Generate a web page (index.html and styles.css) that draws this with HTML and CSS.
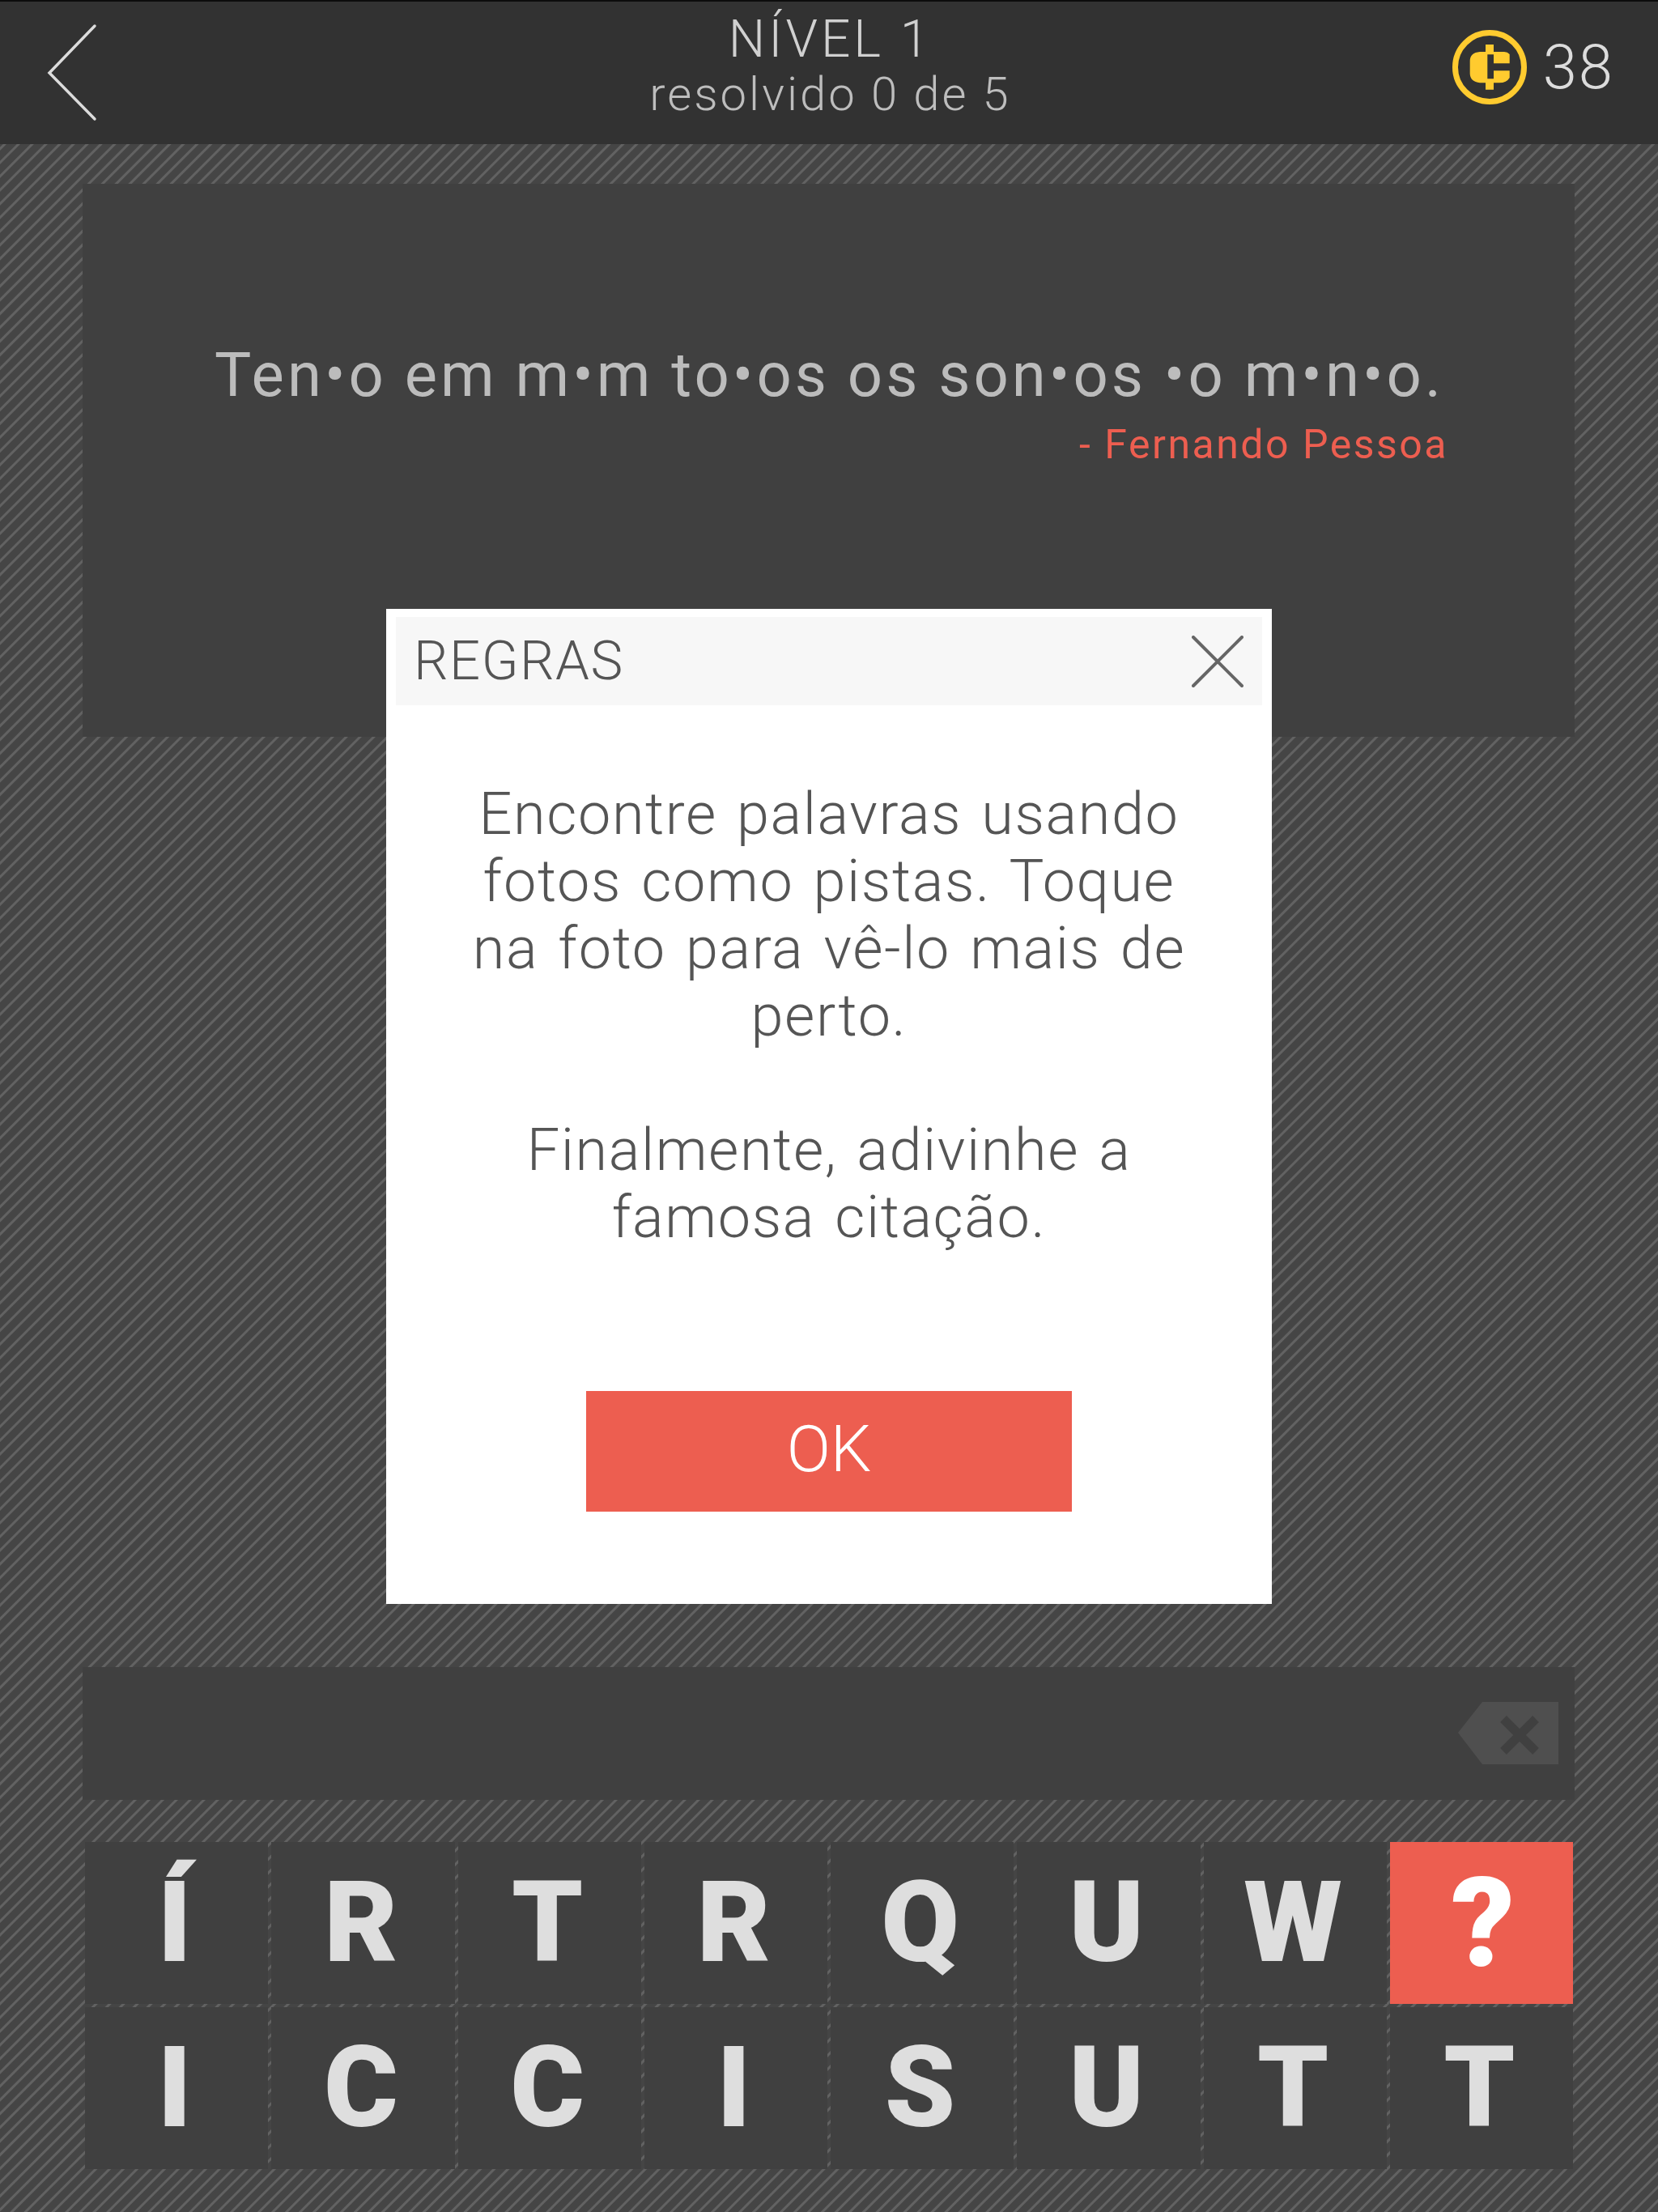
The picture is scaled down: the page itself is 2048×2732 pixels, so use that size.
FILE: index.html
```html
<!DOCTYPE html>
<html lang="pt">
<head>
<meta charset="utf-8">
<title>Nível 1</title>
<link rel="stylesheet" href="styles.css">
</head>
<body>
<div class="screen">
  <header class="topbar">
    <svg class="back" viewBox="0 0 64 124" aria-hidden="true"><path d="M60 3 L4 61 L60 118"/></svg>
    <div class="title">
      <div class="title-main">NÍVEL 1</div>
      <div class="title-sub">resolvido 0 de 5</div>
    </div>
    <div class="coins">
      <svg class="coin" viewBox="0 0 100 100" aria-hidden="true">
        <circle class="coin-ring" cx="50" cy="50" r="42.5"/>
        <path class="coin-c" d="M45 22H55V31H68Q72 31 74.7 34V45.3H55V54.3H74.7V63Q71 69.3 62 69.3H55V77.7H45V69.3H38Q26 68 25.7 58V42Q26 32 38 31H45ZM47.3 34.3V64.3H55V34.3Z" fill-rule="evenodd"/>
      </svg>
      <span class="coin-count">38</span>
    </div>
  </header>

  <section class="quote-panel">
    <p class="quote">Ten•o em m•m to•os os son•os •o m•n•o.</p>
    <p class="author">- Fernando Pessoa</p>
  </section>

  <section class="answer-bar">
    <svg class="backspace" viewBox="0 0 124 78" aria-hidden="true">
      <path class="bs-body" d="M30 0H124V77H30L0 38Z"/>
      <path class="bs-x" d="M56 21L96 61M96 21L56 61"/>
    </svg>
  </section>

  <section class="keys">
    <div class="key">Í</div><div class="key">R</div><div class="key">T</div><div class="key">R</div><div class="key">Q</div><div class="key">U</div><div class="key">W</div><div class="key key-hint">?</div>
    <div class="key">I</div><div class="key">C</div><div class="key">C</div><div class="key">I</div><div class="key">S</div><div class="key">U</div><div class="key">T</div><div class="key">T</div>
  </section>

  <div class="modal">
    <div class="modal-head">
      <span class="modal-title">REGRAS</span>
      <svg class="close" viewBox="0 0 64 64" aria-hidden="true"><path d="M2 2L62 62M62 2L2 62"/></svg>
    </div>
    <div class="modal-body">
      <p class="rule">Encontre palavras usando fotos como pistas. Toque na foto para vê-lo mais de perto.</p>
      <p class="rule">Finalmente, adivinhe a famosa citação.</p>
    </div>
    <div class="ok">OK</div>
  </div>
</div>
</body>
</html>
```
FILE: styles.css
```css
* { box-sizing: border-box; }
html, body { margin: 0; padding: 0; }
body { font-family: Roboto, "Liberation Sans", sans-serif; background: #424242; }
p { margin: 0; }

.screen {
  position: relative;
  width: 2048px;
  height: 2732px;
  overflow: hidden;
  display: flex;
  flex-direction: column;
  background-color: #454545;
  background-image: repeating-linear-gradient(135deg, #454545 0, #454545 8px, #626262 9px, #626262 11px, #454545 12px);
}

.topbar {
  flex: none;
  height: 178px;
  border-top: 2px solid #0c0c0c;
  background: #323232;
  display: grid;
  grid-template-columns: 1fr auto 1fr;
  align-items: center;
  padding: 0 54px 0 57px;
}
.back { width: 64px; height: 124px; fill: none; stroke: #dcdcdc; stroke-width: 3.5; stroke-linecap: round; margin-top: 2px; }
.title { text-align: center; font-weight: 300; color: #d0d0d0; margin-bottom: 17px; }
.title-main { font-size: 64px; line-height: 68px; letter-spacing: 4px; }
.title-sub { font-size: 58px; line-height: 66px; letter-spacing: 3px; color: #bdbdbd; }
.coins { justify-self: end; display: flex; align-items: center; gap: 16px; margin-bottom: 14px; }
.coin { width: 100px; height: 100px; }
.coin-ring { fill: none; stroke: #ffcb2f; stroke-width: 7; }
.coin-c { fill: #ffcb2f; }
.coin-count { font-size: 76px; font-weight: 300; color: #dcdcdc; letter-spacing: 2px; }

.quote-panel {
  flex: none;
  height: 683px;
  margin: 49px 103px 0 102px;
  padding: 185px 156px 0 0;
  background: #404040;
  text-align: right;
}
.quote { font-size: 76px; line-height: 102px; letter-spacing: 4px; word-spacing: -1px; color: #bcbcbc; font-weight: 400; white-space: nowrap; margin-right: 5px; }
.author { font-size: 50px; line-height: 70px; letter-spacing: 2.5px; color: #ed5e50; }

.answer-bar {
  flex: none;
  height: 164px;
  margin: 1149px 103px 0 102px;
  background: #404040;
  display: flex;
  align-items: center;
  justify-content: flex-end;
  padding-right: 20px;
}
.backspace { width: 124px; height: 78px; }
.bs-body { fill: #4f4f4f; }
.bs-x { fill: none; stroke: #404040; stroke-width: 11; }

.keys {
  flex: none;
  margin: 52px 105px 0 105px;
  display: grid;
  grid-template-columns: repeat(8, 1fr);
  grid-auto-rows: 200px;
  gap: 4px;
}
.key {
  background: #404040;
  display: flex;
  align-items: center;
  justify-content: center;
  font-size: 140px;
  font-weight: 900;
  color: #dedede;
  padding: 0 5px 2px 0;
}
.key-hint { background: #ed5e50; color: #fff; font-size: 154px; padding: 0 0 0 4px; }

.modal {
  position: absolute;
  left: 477px;
  top: 752px;
  width: 1094px;
  height: 1229px;
  background: #fff;
  padding: 10px 12px 0;
  display: flex;
  flex-direction: column;
  align-items: center;
}
.modal-head {
  align-self: stretch;
  height: 109px;
  background: #f7f7f7;
  display: flex;
  align-items: center;
  justify-content: space-between;
  padding: 0 23px 0 22px;
}
.modal-title { font-size: 67px; font-weight: 300; color: #555; letter-spacing: 1.5px; margin-top: -2px; }
.close { width: 64px; height: 64px; fill: none; stroke: #666; stroke-width: 4; stroke-linecap: round; }
.modal-body { width: 900px; margin-top: 93px; text-align: center; font-size: 72px; font-weight: 300; line-height: 83px; letter-spacing: 1.6px; word-spacing: 5px; color: #555; }
.rule + .rule { margin-top: 83px; }
.ok {
  width: 600px;
  height: 149px;
  margin-top: 173px;
  padding-bottom: 6px;
  background: #ed5e50;
  color: #fff;
  font-size: 80px;
  font-weight: 300;
  display: flex;
  align-items: center;
  justify-content: center;
}
```
